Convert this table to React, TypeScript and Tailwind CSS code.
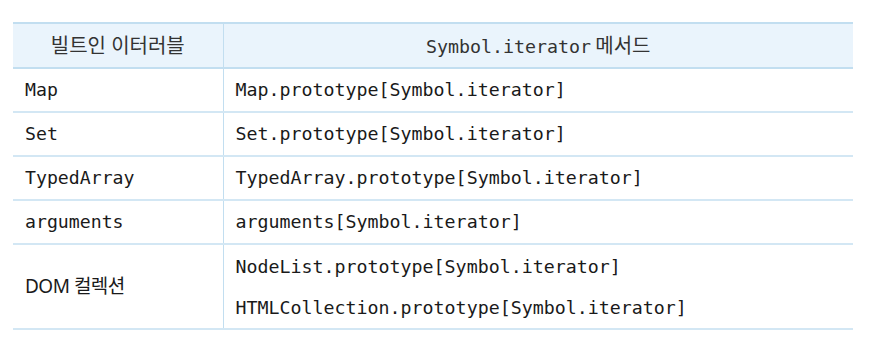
const mono = "font-['DejaVu_Sans_Mono','Noto_Sans_CJK_KR',monospace]";
const sans = "font-['Noto_Sans','Noto_Sans_CJK_KR',sans-serif]";

const rows: { name: string; mono: boolean; methods: string[] }[] = [
  { name: 'Map', mono: true, methods: ['Map.prototype[Symbol.iterator]'] },
  { name: 'Set', mono: true, methods: ['Set.prototype[Symbol.iterator]'] },
  { name: 'TypedArray', mono: true, methods: ['TypedArray.prototype[Symbol.iterator]'] },
  { name: 'arguments', mono: true, methods: ['arguments[Symbol.iterator]'] },
  {
    name: 'DOM 컬렉션',
    mono: false,
    methods: ['NodeList.prototype[Symbol.iterator]', 'HTMLCollection.prototype[Symbol.iterator]'],
  },
];

export default function App() {
  return (
    <div className="w-[872px] h-[348px] bg-white pt-[22px] pl-[13px]">
      <table className="w-[840px] border-collapse text-[#1a1a1a]">
        <thead>
          <tr className="bg-[#eaf4fc] h-[45px] border-y-2 border-[#c2def0]">
            <th className={`w-[210px] font-normal text-[20px] text-[#333] border-r border-[#c2def0] ${sans}`}>
              빌트인 이터러블
            </th>
            <th className="font-normal text-[#333]">
              <span className={`${mono} text-[18.3px]`}>Symbol.iterator</span>{' '}
              <span className={`${sans} text-[20px]`}>메서드</span>
            </th>
          </tr>
        </thead>
        <tbody>
          {rows.map((r) => (
            <tr key={r.name} className="border-b-2 border-[#d3e7f4]">
              <td
                className={`pl-[12px] border-r border-[#c2def0] ${r.mono ? `${mono} text-[18.2px]` : `${sans} text-[19px] tracking-[-0.5px]`}`}
              >
                {r.name}
              </td>
              <td className={`pl-[12px] text-[18.3px] ${mono}`}>
                {r.methods.map((m, i) => (
                  <div
                    key={m}
                    className={`flex items-center ${r.methods.length > 1 ? (i === 0 ? 'h-[43px]' : 'h-[40px]') : 'h-[42px]'}`}
                  >
                    {m}
                  </div>
                ))}
              </td>
            </tr>
          ))}
        </tbody>
      </table>
    </div>
  );
}
